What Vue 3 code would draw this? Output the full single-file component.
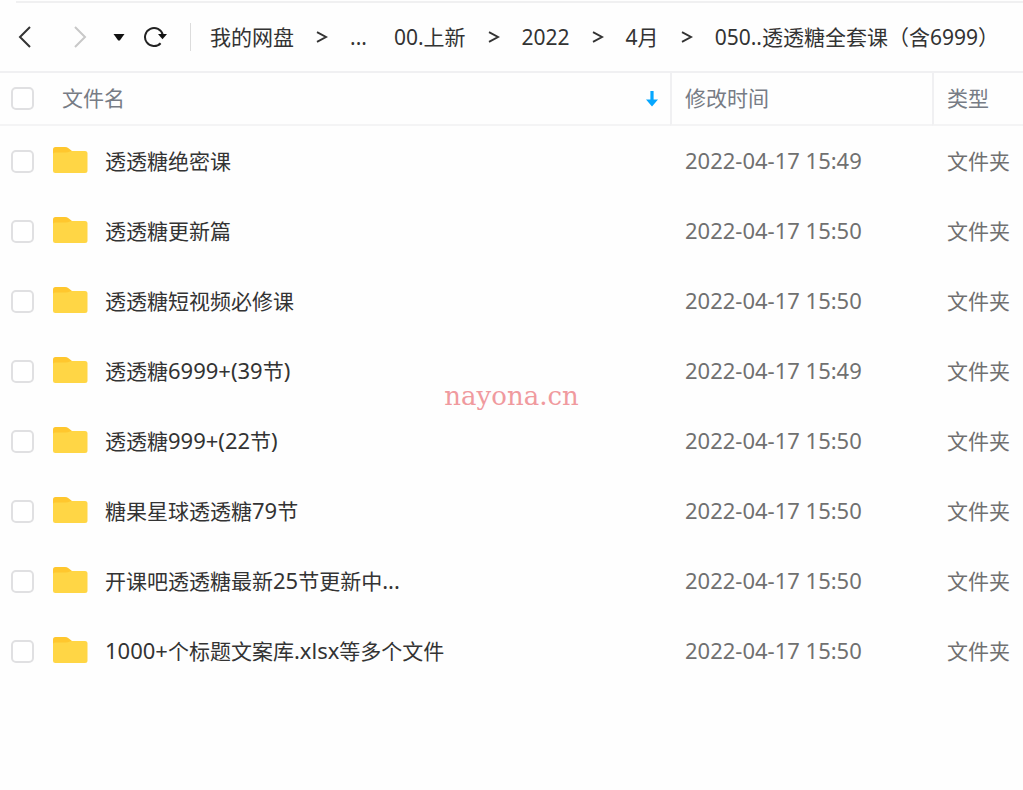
<script setup>
import { ref } from 'vue'

const crumbs = [
  { label: '我的网盘' },
  { label: '...', arrow: true },
  { label: '00.上新', arrow: false },
  { label: '2022', arrow: true },
  { label: '4月', arrow: true },
  { label: '050..透透糖全套课（含6999）', arrow: true },
]

const files = ref([
  { name: '透透糖绝密课', time: '2022-04-17 15:49' },
  { name: '透透糖更新篇', time: '2022-04-17 15:50' },
  { name: '透透糖短视频必修课', time: '2022-04-17 15:50' },
  { name: '透透糖6999+(39节)', time: '2022-04-17 15:49' },
  { name: '透透糖999+(22节)', time: '2022-04-17 15:50' },
  { name: '糖果星球透透糖79节', time: '2022-04-17 15:50' },
  { name: '开课吧透透糖最新25节更新中...', time: '2022-04-17 15:50' },
  { name: '1000+个标题文案库.xlsx等多个文件', time: '2022-04-17 15:50' },
].map((file) => ({ ...file, type: '文件夹', checked: false })))

// Splits a label into Latin and Chinese runs, which are set in different sizes.
const runs = (text) =>
  text.match(/[\x20-\x7e]+|[^\x20-\x7e]+/g).map((part) => ({
    part,
    latin: /^[\x20-\x7e]/.test(part),
  }))

const toggleAll = (event) => {
  files.value.forEach((file) => { file.checked = event.target.checked })
}
</script>

<template>
  <main class="browser">
    <div class="top-rule"></div>
    <header class="toolbar">
      <div class="controls">
        <button type="button" class="back" aria-label="后退">
          <svg width="14" height="22" viewBox="0 0 14 22"><path d="M12 1 2 11l10 10" fill="none" stroke="#333" stroke-width="2" /></svg>
        </button>
        <button type="button" class="forward" aria-label="前进">
          <svg width="14" height="22" viewBox="0 0 14 22"><path d="m2 1 10 10L2 21" fill="none" stroke="#c8c8c8" stroke-width="2" /></svg>
        </button>
        <button type="button" class="history" aria-label="历史记录">
          <svg width="12" height="8" viewBox="0 0 12 8"><path d="M.5 1h11L6.800 7.500H5.200z" fill="#111" /></svg>
        </button>
        <button type="button" class="reload" aria-label="刷新">
          <svg width="26" height="22" viewBox="0 0 26 22">
            <path d="M17.600 17.200A9 9 0 1 1 19.800 9" fill="none" stroke="#222" stroke-width="2" />
            <path d="M15 8h9l-4.500 5.200z" fill="#111" />
          </svg>
        </button>
      </div>
      <nav class="crumbs" aria-label="路径">
        <template v-for="crumb in crumbs" :key="crumb.label">
          <svg v-if="crumb.arrow" class="separator" width="12" height="12" viewBox="0 0 12 12"><path d="m1 1.200 9 4.800-9 4.800" fill="none" stroke="#333" stroke-width="1.900" /></svg>
          <a href="#" :class="{ spaced: crumb.arrow === false }">{{ crumb.label }}</a>
        </template>
      </nav>
    </header>

    <table>
      <thead>
        <tr>
          <th scope="col">
            <div class="name-head">
              <input id="select-all" type="checkbox" aria-label="全选" @change="toggleAll" />
              <label class="title" for="select-all">文件名</label>
              <svg width="14" height="18" viewBox="0 0 14 18"><path d="M5.400 1h3.200v8.500H13L7 16.500 1 9.500h4.400z" fill="#06a7ff" /></svg>
            </div>
          </th>
          <th scope="col" class="time"><span class="head-text">修改时间</span></th>
          <th scope="col" class="type"><span class="head-text">类型</span></th>
        </tr>
      </thead>
      <tbody>
        <tr v-for="(file, i) in files" :key="file.name">
          <td>
            <div class="name-cell">
              <input :id="`file-${i}`" v-model="file.checked" type="checkbox" />
              <svg class="folder" width="36" height="30" viewBox="0 0 36 30">
                <path d="M3.500 1H13q2 0 3.500 1.200L20 5v9H1V3.500Q1 1 3.500 1z" fill="#ffc72e" />
                <path d="M1 8q0-1.500 2-1.500h11q2 0 3.300-.8 1.200-.7 3-.7H33q2.500 0 2.500 2.500v17Q35.500 27 33 27H3.500Q1 27 1 24.500z" fill="#ffd645" />
              </svg>
              <label :for="`file-${i}`"><span v-for="run in runs(file.name)" :key="run.part" :class="{ latin: run.latin }">{{ run.part }}</span></label>
            </div>
          </td>
          <td class="time"><span class="latin">{{ file.time }}</span></td>
          <td class="type">{{ file.type }}</td>
        </tr>
      </tbody>
    </table>
    <div class="watermark">nayona.cn</div>
  </main>
</template>

<style>
body {
  background: #fefefe;
}
</style>

<style scoped>
.browser {
  position: relative;
  min-height: 100vh;
  overflow: hidden;
  font-family: "Noto Sans", "Noto Sans CJK SC", sans-serif;
  font-size: 21px;
  line-height: 30px;
  color: #333;
}

.latin {
  font-size: 22px;
  line-height: 28px;
}

.top-rule {
  height: 2px;
  margin: 1px 0 0 16px;
  background: #f0f0f1;
}

.toolbar {
  display: flex;
  align-items: center;
  height: 68px;
  border-bottom: 2px solid #f0f0f2;
}

.controls {
  display: flex;
  align-items: center;
  flex: none;
  height: 28px;
  padding: 0 21px 0 18px;
  border-right: 1px solid #dcdcdc;
}

button {
  display: block;
  padding: 0;
  border: 0;
  background: none;
}

button svg {
  display: block;
}

.forward {
  margin-left: 41px;
}

.history {
  margin-left: 26px;
}

.reload {
  margin-left: 18px;
}

.crumbs {
  display: flex;
  align-items: center;
  flex: none;
  padding-left: 19px;
  white-space: nowrap;
}

.crumbs a {
  color: inherit;
  text-decoration: none;
}

.crumbs .spaced {
  margin-left: 27px;
}

.separator {
  margin: 0 22px;
}

table {
  width: 100%;
  border-collapse: separate;
  border-spacing: 0;
  table-layout: fixed;
}

th {
  height: 51px;
  padding: 0;
  border-bottom: 2px solid #f4f4f5;
  font-weight: 400;
  text-align: left;
  color: #777c85;
}

th + th {
  border-left: 2px solid #f0f0f2;
}

.time {
  width: 247px;
  padding: 0 0 0 13px;
}

.type {
  width: 76px;
  padding: 0 0 0 13px;
  white-space: nowrap;
}

td {
  height: 70px;
  padding: 0;
}

td.time,
td.type {
  padding-left: 15px;
  color: #707070;
}

.name-head,
.name-cell {
  display: flex;
  align-items: center;
  padding-left: 11px;
}

.name-head {
  padding-right: 11px;
}

.title {
  flex: 1;
  margin-left: 28px;
}

.title,
.head-text {
  display: block;
  padding-bottom: 2px;
}

.folder {
  flex: none;
  margin: 0 17px 0 18px;
}

label {
  white-space: nowrap;
}

input {
  appearance: none;
  flex: none;
  width: 23px;
  height: 23px;
  margin: 0;
  border: 2px solid #e0e0e2;
  border-radius: 5px;
  background: #fff;
}

input:checked {
  border-color: #06a7ff;
  background: #06a7ff;
}

.watermark {
  position: absolute;
  top: 381px;
  left: 50%;
  transform: translateX(-50%);
  font-family: "DejaVu Serif", serif;
  font-size: 26px;
  color: #f09a9e;
  pointer-events: none;
}
</style>
